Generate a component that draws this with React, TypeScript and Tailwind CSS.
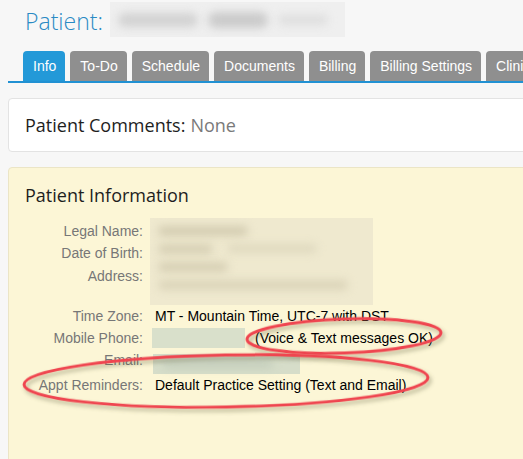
import React from "react";

const tabs = ["Info", "To-Do", "Schedule", "Documents", "Billing", "Billing Settings", "Clinical"];

function Blob({ w, h, className = "" }: { w: number; h: number; className?: string }) {
  return <div className={"rounded-full blur-[4px] " + className} style={{ width: w, height: h }} />;
}

export default function App() {
  return (
    <div className="relative w-[523px] h-[459px] overflow-hidden bg-[#f7f7f7]">
      <div className="w-[600px] pl-[8px]">
        {/* Header */}
        <div className="h-[51px] flex items-start pl-[17px]">
          <span className="mt-[5px] text-[23px] leading-[32px] font-light text-[#2a8ac4] [font-family:'Open_Sans',sans-serif]">
            Patient:
          </span>
          <div className="ml-[7px] mt-[2px] w-[235px] h-[35px] bg-[#efefef] flex items-center gap-[10px] px-[8px] overflow-hidden">
            <Blob w={80} h={14} className="bg-[#d2d2d2]" />
            <Blob w={60} h={16} className="bg-[#cbcbcb]" />
            <Blob w={50} h={10} className="bg-[#dedede]" />
          </div>
        </div>
        {/* Tabs */}
        <div className="flex gap-[5px] pl-[15px] border-b-[2px] border-[#2191d3] [font-family:'Liberation_Sans',Arial,sans-serif]">
          {tabs.map((t, i) => (
            <div
              key={t}
              className={
                "h-[30px] pl-[10px] pr-[9px] flex items-center rounded-t-[4px] text-[14px] text-white whitespace-nowrap " +
                (i === 0 ? "bg-[#2399d8]" : "bg-[#8f8f8f]")
              }
            >
              {t}
            </div>
          ))}
        </div>
        {/* Comments card */}
        <div className="mt-[15px] h-[54px] bg-white border border-[#e3e3e3] rounded-[4px] flex items-center pl-[16px] text-[18px] [font-family:'Open_Sans',sans-serif]">
          <span className="text-[#1e1e1e]">Patient Comments:</span>
          <span className="ml-[5px] text-[#7a7a7a]">None</span>
        </div>
        {/* Patient Info card */}
        <div className="mt-[15px] h-[320px] bg-[#fcf6d6] border border-[#ebe5c6] rounded-[4px] pt-[14px]">
          <div className="pl-[16px] text-[18px] leading-[26px] text-[#1e1e1e] [font-family:'Open_Sans',sans-serif]">
            Patient Information
          </div>
          <div className="mt-[12px] grid grid-cols-[134px_1fr] gap-x-[12px] text-[14px] leading-[22px] [font-family:'Liberation_Sans',Arial,sans-serif]">
            <div className="text-right text-[#777]">Legal Name:</div>
            <div className="row-span-3 -ml-[5px] -mt-[2px] w-[223px] h-[87px] bg-[#efe9cf] flex flex-col gap-[8px] pl-[8px] pt-[8px] overflow-hidden">
              <Blob w={90} h={10} className="bg-[#d3ccb1]" />
              <div className="flex gap-[14px]">
                <Blob w={55} h={10} className="bg-[#d6cfb4]" />
                <Blob w={90} h={9} className="bg-[#dfd9bf]" />
              </div>
              <Blob w={70} h={10} className="bg-[#d6cfb4]" />
              <Blob w={190} h={10} className="bg-[#dbd4b9]" />
            </div>
            <div className="text-right text-[#777]">Date of Birth:</div>
            <div className="text-right text-[#777] h-[40px]">Address:</div>

            <div className="text-right text-[#777]">Time Zone:</div>
            <div className="text-black">MT - Mountain Time, UTC-7 with DST</div>

            <div className="text-right text-[#777]">Mobile Phone:</div>
            <div className="flex items-center text-black -ml-[3px]">
              <div className="w-[93px] h-[20px] bg-[#d9e0cb]" />
              <span className="ml-[10px]">(Voice &amp; Text messages OK)</span>
            </div>

            <div className="text-right text-[#777]">Email:</div>
            <div className="-ml-[2px] mt-[5px] w-[147px] h-[20px] bg-[#d6ddc9] flex items-center px-[10px]">
              <Blob w={110} h={8} className="bg-[#c3cdbb]" />
            </div>

            <div className="text-right text-[#777]">Appt Reminders:</div>
            <div className="text-black">Default Practice Setting (Text and Email)</div>
          </div>
        </div>
      </div>
      {/* Red annotation ellipses */}
      <svg className="absolute inset-0 pointer-events-none" width="523" height="459" viewBox="0 0 523 459">
        <defs>
          <filter id="sh" x="-10%" y="-50%" width="120%" height="200%">
            <feDropShadow dx="2" dy="3" stdDeviation="2" floodColor="#5a5a3a" floodOpacity="0.45" />
          </filter>
        </defs>
        <ellipse cx="344" cy="336" rx="97" ry="17" fill="none" stroke="#ef4550" strokeWidth="3" filter="url(#sh)" transform="rotate(-2 344 336)" />
        <ellipse cx="226" cy="381" rx="202" ry="26" fill="none" stroke="#ef4550" strokeWidth="3" filter="url(#sh)" transform="rotate(-1 226 381)" />
      </svg>
    </div>
  );
}
